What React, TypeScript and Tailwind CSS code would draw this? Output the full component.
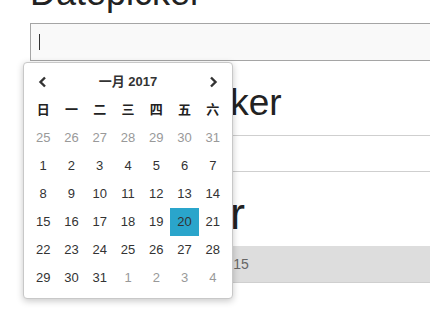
const WEEKDAYS = ['日', '一', '二', '三', '四', '五', '六'];

type Day = { n: number; muted?: boolean; selected?: boolean };

function buildDays(): Day[][] {
  const days: Day[] = [];
  for (let n = 25; n <= 31; n++) days.push({ n, muted: true });
  for (let n = 1; n <= 31; n++) days.push({ n, selected: n === 20 });
  for (let n = 1; n <= 4; n++) days.push({ n, muted: true });
  const rows: Day[][] = [];
  for (let i = 0; i < days.length; i += 7) rows.push(days.slice(i, i + 7));
  return rows;
}

function Chevron({ dir }: { dir: 'left' | 'right' }) {
  return (
    <svg width="10" height="12" viewBox="0 0 10 12" className="text-[#333]">
      <polyline
        points={dir === 'left' ? '7,1.5 2.5,6 7,10.5' : '3,1.5 7.5,6 3,10.5'}
        fill="none"
        stroke="currentColor"
        strokeWidth="2.4"
      />
    </svg>
  );
}

function Calendar() {
  const rows = buildDays();
  return (
    <div className="absolute left-[23px] top-[62px] w-[210px] rounded-[4px] border border-[#c8c8c8] bg-white px-[5px] pt-[4px] pb-[6px] shadow-[0_2px_7px_rgba(0,0,0,0.22)]">
      <div className="grid grid-cols-7 h-[29px] items-center text-[13px] font-bold text-[#333]">
        <div className="flex justify-center">
          <Chevron dir="left" />
        </div>
        <div className="col-span-5 text-center">一月 2017</div>
        <div className="flex justify-center">
          <Chevron dir="right" />
        </div>
      </div>
      <div className="grid grid-cols-7 h-[28px] items-center text-[13px] font-bold text-[#222]">
        {WEEKDAYS.map((w) => (
          <div key={w} className="text-center">{w}</div>
        ))}
      </div>
      {rows.map((row, i) => (
        <div key={i} className="grid grid-cols-7">
          {row.map((d, j) => (
            <div
              key={j}
              className={
                'h-[28px] flex items-center justify-center text-[13px] ' +
                (d.selected ? 'bg-[#2aa5cb] text-[#333]' : d.muted ? 'text-[#999]' : 'text-[#333]')
              }
            >
              {d.n}
            </div>
          ))}
        </div>
      ))}
    </div>
  );
}

export default function App() {
  return (
    <div
      className="relative h-[311px] w-[430px] overflow-hidden bg-white text-[#222]"
      style={{ fontFamily: '"Liberation Sans", "Noto Sans CJK SC", sans-serif' }}
    >
      <div className="pl-[30px] -mt-[25px]">
        <h1 className="text-[36px] leading-[36px] text-[#222]">Datepicker</h1>
        <div className="mt-[12px] h-[38px] w-[420px] border border-[#a5a5a5] bg-[#f9f9f9] flex items-center pl-[8px]">
          <span className="block h-[16px] w-px bg-[#333]" />
        </div>
        <h2 className="mt-[24px] text-[37px] leading-[36px] text-[#222] whitespace-nowrap">Vue Datepicker</h2>
        <div className="mt-[14px] h-[37px] border-y border-[#cfcfcf] bg-white" />
        <h2 className="mt-[20px] text-[45px] leading-[44px] text-[#222] whitespace-nowrap">Datepicker</h2>
        <div className="mt-[10px] h-[37px] border-b border-[#cfcfcf] bg-[#dddddd] flex items-center pl-[16px] text-[14px] text-[#666] whitespace-nowrap">
          Disabled dates: Dec 25 ~ Jan 15
        </div>
      </div>
      <Calendar />
    </div>
  );
}
